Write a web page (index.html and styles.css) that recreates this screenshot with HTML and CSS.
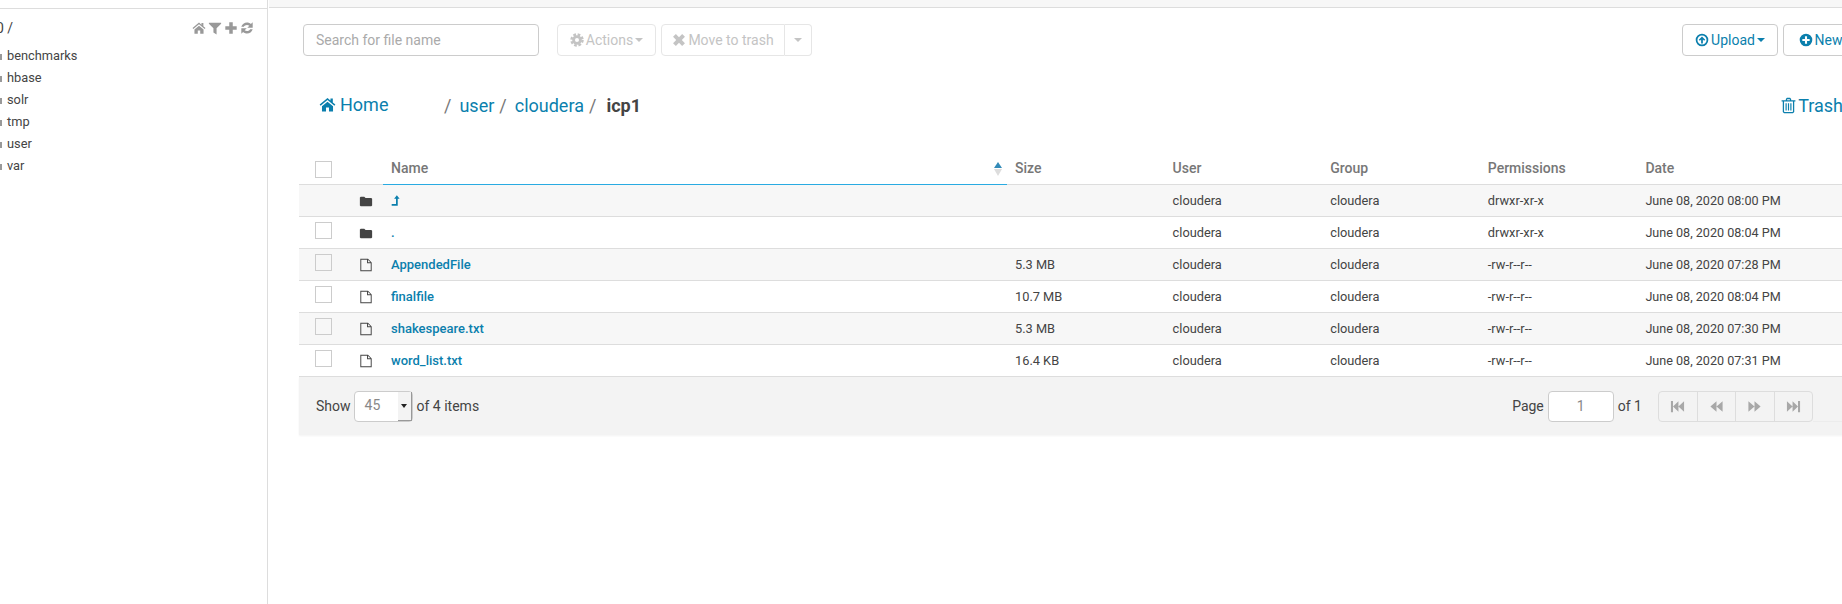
FILE: index.html
```html
<!DOCTYPE html>
<html>
<head>
  <title>File Browser</title>
  <link rel="stylesheet" href="styles.css">
</head>
<body>

<svg class="defs" xmlns="http://www.w3.org/2000/svg">
  <symbol id="i-home" viewBox="0 0 16 16"><path d="M8 1.8 0.6 8l0.9 1.1L8 3.7l6.5 5.4L15.4 8 13 6V2.4h-2.2v1.800zM2.800 9.600V14.500h3.800v-3.600h2.800v3.600h3.800V9.600L8 5.300z"/></symbol>
  <symbol id="i-filter" viewBox="0 0 16 16"><path d="M1 2h14v1L9.800 8.400V15.500L6.200 13V8.400L1 3z"/></symbol>
  <symbol id="i-plus" viewBox="0 0 16 16"><path d="M6 1.500h4v4.500h4.500v4H10v4.500H6V10H1.500V6H6z"/></symbol>
  <symbol id="i-refresh" viewBox="0 0 16 16"><path d="M1.500 6.600C2.400 3.500 5 1.600 8 1.600c1.700 0 3.200.6 4.400 1.700L14.500 1.500V7.800H8.300l2.400-2.400C9.900 4.800 9 4.500 8 4.500c-1.700 0-3 .9-3.600 2.100zM14.500 9.400C13.600 12.500 11 14.400 8 14.400c-1.700 0-3.200-.6-4.400-1.700L1.500 14.500V8.200H7.700l-2.400 2.400c.8.600 1.700.9 2.700.9 1.700 0 3-.9 3.600-2.100z"/></symbol>
  <symbol id="i-cog" viewBox="0 0 16 16"><circle cx="8" cy="8" r="3.900" fill="none" stroke="currentColor" stroke-width="3.200"/><circle cx="8" cy="8" r="6.300" fill="none" stroke="currentColor" stroke-width="2.800" stroke-dasharray="3 1.950"/></symbol>
  <symbol id="i-times" viewBox="0 0 16 16"><path d="M4.400 1.200 8 4.800l3.600-3.600 3.200 3.200L11.200 8l3.600 3.600-3.200 3.200L8 11.200l-3.600 3.600-3.200-3.200L4.800 8 1.200 4.400z"/></symbol>
  <symbol id="i-upload" viewBox="0 0 16 16"><path fill-rule="evenodd" d="M8 .8a7.200 7.200 0 1 1 0 14.400A7.200 7.200 0 0 1 8 .8zm0 2a5.200 5.200 0 1 0 0 10.400A5.200 5.200 0 0 0 8 2.800zM8 3.900l3.700 3.700-1.300 1.300-1.400-1.400V12H7V7.500L5.600 8.900 4.300 7.600z"/></symbol>
  <symbol id="i-new" viewBox="0 0 16 16"><path fill-rule="evenodd" d="M8 .8a7.200 7.200 0 1 1 0 14.400A7.200 7.200 0 0 1 8 .8zM6.800 3.800v3H3.800v2.400h3v3h2.400v-3h3V6.800h-3v-3z"/></symbol>
  <symbol id="i-trash" viewBox="0 0 16 16"><path fill-rule="evenodd" d="M5.500 3V1.800L6.500.8h3l1 1V3H14.500v1.200H13.400V14l-1.200 1.200H3.800L2.600 14V4.200H1.500V3zM6.700 3h2.600V2H6.700zM3.800 4.200V13.600l.4.400h7.600l.4-.4V4.200zM5.200 5.800h1.100v6.800H5.200zM7.450 5.800h1.100v6.800H7.450zM9.700 5.800h1.100v6.800H9.700z"/></symbol>
  <symbol id="i-folder" viewBox="0 0 16 16"><path d="M1 4l1-1h4l1.500 1.500H14l1 1V13l-1 1H2l-1-1z"/></symbol>
  <symbol id="i-file" viewBox="0 0 16 16"><path fill-rule="evenodd" d="M1.500.8h8.800l4.200 4.200V15.200H1.500zM2.600 1.900V14.100h10.800V6H9.200V1.900zM10.300 2.200V4.900h2.800z"/></symbol>
  <symbol id="i-levelup" viewBox="0 0 16 16"><path d="M8.500.5 12.500 5.500H9.800V15.500H1V13H7.300V5.500H4.500z"/></symbol>
  <symbol id="i-first" viewBox="0 0 16 16"><path d="M1 2h2.200v12H1zM3.200 8 9 2.500v11zM9 8l6-5.500v11z"/></symbol>
  <symbol id="i-prev" viewBox="0 0 16 16"><path d="M1.500 8 8 2.500v11zM8 8l6.500-5.500v11z"/></symbol>
  <symbol id="i-next" viewBox="0 0 16 16"><path d="M1.500 2.500 8 8 1.500 13.500zM8 2.500 14.500 8 8 13.500z"/></symbol>
  <symbol id="i-last" viewBox="0 0 16 16"><path d="M1 2.500 7 8l-6 5.500zM7 2.500 12.800 8 7 13.500zM12.800 2H15v12h-2.200z"/></symbol>
</svg>

<div class="page">
  <aside class="sidebar">
    <div class="side-top"></div>
    <div class="side-path">
      <span class="crumb-root">0 /</span>
      <span class="side-tools">
        <svg class="ic"><use href="#i-home"/></svg>
        <svg class="ic"><use href="#i-filter"/></svg>
        <svg class="ic"><use href="#i-plus"/></svg>
        <svg class="ic"><use href="#i-refresh"/></svg>
      </span>
    </div>
    <ul class="tree">
      <li><span class="tree-ic"></span>benchmarks</li>
      <li><span class="tree-ic"></span>hbase</li>
      <li><span class="tree-ic"></span>solr</li>
      <li><span class="tree-ic"></span>tmp</li>
      <li><span class="tree-ic"></span>user</li>
      <li><span class="tree-ic"></span>var</li>
    </ul>
  </aside>

  <main class="main">
    <div class="main-top"></div>
    <div class="content">
      <div class="toolbar">
        <div class="search">Search for file name</div>
        <button class="btn btn-off btn-actions"><svg class="ic"><use href="#i-cog"/></svg>Actions<span class="caret"></span></button>
        <div class="btn-group">
          <button class="btn btn-off btn-trash"><svg class="ic"><use href="#i-times"/></svg>Move to trash</button>
          <button class="btn btn-off btn-split"><span class="caret"></span></button>
        </div>
        <button class="btn btn-link btn-upload"><svg class="ic"><use href="#i-upload"/></svg>Upload<span class="caret"></span></button>
        <button class="btn btn-link btn-new"><svg class="ic"><use href="#i-new"/></svg>New<span class="caret"></span></button>
      </div>

      <div class="crumbs">
        <a class="home"><svg class="ic"><use href="#i-home"/></svg>Home</a>
        <span class="sep first">/</span>
        <a>user</a>
        <span class="sep">/</span>
        <a>cloudera</a>
        <span class="sep">/</span>
        <b>icp1</b>
        <a class="trash"><svg class="ic"><use href="#i-trash"/></svg>Trash</a>
      </div>

      <table class="files">
        <colgroup>
          <col class="c-check"><col class="c-icon"><col class="c-name">
          <col class="c-col"><col class="c-col"><col class="c-col"><col class="c-col"><col class="c-date">
        </colgroup>
        <thead>
          <tr>
            <th><span class="box"></span></th>
            <th></th>
            <th class="sorted">Name<span class="sort"><i class="up"></i><i class="down"></i></span></th>
            <th>Size</th>
            <th>User</th>
            <th>Group</th>
            <th>Permissions</th>
            <th>Date</th>
          </tr>
        </thead>
        <tbody>
          <tr>
            <td></td>
            <td><svg class="ic ic-row"><use href="#i-folder"/></svg></td>
            <td><a><svg class="ic ic-up"><use href="#i-levelup"/></svg></a></td>
            <td></td><td>cloudera</td><td>cloudera</td><td>drwxr-xr-x</td><td class="date">June 08, 2020 08:00 PM</td>
          </tr>
          <tr>
            <td><span class="box"></span></td>
            <td><svg class="ic ic-row"><use href="#i-folder"/></svg></td>
            <td><a>.</a></td>
            <td></td><td>cloudera</td><td>cloudera</td><td>drwxr-xr-x</td><td class="date">June 08, 2020 08:04 PM</td>
          </tr>
          <tr>
            <td><span class="box"></span></td>
            <td><svg class="ic ic-row"><use href="#i-file"/></svg></td>
            <td><a>AppendedFile</a></td>
            <td>5.3 MB</td><td>cloudera</td><td>cloudera</td><td>-rw-r--r--</td><td class="date">June 08, 2020 07:28 PM</td>
          </tr>
          <tr>
            <td><span class="box"></span></td>
            <td><svg class="ic ic-row"><use href="#i-file"/></svg></td>
            <td><a>finalfile</a></td>
            <td>10.7 MB</td><td>cloudera</td><td>cloudera</td><td>-rw-r--r--</td><td class="date">June 08, 2020 08:04 PM</td>
          </tr>
          <tr>
            <td><span class="box"></span></td>
            <td><svg class="ic ic-row"><use href="#i-file"/></svg></td>
            <td><a>shakespeare.txt</a></td>
            <td>5.3 MB</td><td>cloudera</td><td>cloudera</td><td>-rw-r--r--</td><td class="date">June 08, 2020 07:30 PM</td>
          </tr>
          <tr>
            <td><span class="box"></span></td>
            <td><svg class="ic ic-row"><use href="#i-file"/></svg></td>
            <td><a>word_list.txt</a></td>
            <td>16.4 KB</td><td>cloudera</td><td>cloudera</td><td>-rw-r--r--</td><td class="date">June 08, 2020 07:31 PM</td>
          </tr>
        </tbody>
      </table>

      <div class="pager">
        <span>Show</span>
        <div class="select"><span>45</span><span class="select-arrow"><span class="caret"></span></span></div>
        <span class="after-select">of 4 items</span>
        <span class="page-label">Page</span>
        <div class="page-input">1</div>
        <span>of 1</span>
        <div class="page-btns">
          <span><svg class="ic"><use href="#i-first"/></svg></span>
          <span><svg class="ic"><use href="#i-prev"/></svg></span>
          <span><svg class="ic"><use href="#i-next"/></svg></span>
          <span><svg class="ic"><use href="#i-last"/></svg></span>
        </div>
        <div class="page-rest"></div>
      </div>
    </div>
  </main>
</div>

</body>
</html>
```

FILE: styles.css
```css
html, body {
  margin: 0;
  height: 100%;
  overflow: hidden;
  background: #fff;
  color: #444;
  font-family: Roboto, "Liberation Sans", sans-serif;
  font-size: 13px;
}
.defs {
  display: none;
}
.ic {
  width: 1em;
  height: 1em;
  fill: currentColor;
  flex: none;
}
a {
  color: #0b7fad;
}

.page {
  display: flex;
  height: 604px;
}

/* left tree */
.sidebar {
  width: 267px;
  flex: none;
  border-right: 1px solid #ddd;
  overflow: hidden;
}
.side-top {
  height: 8px;
  border-bottom: 1px solid #ddd;
}
.side-path {
  display: flex;
  justify-content: space-between;
  align-items: center;
  height: 20px;
  margin-top: 9px;
  margin-left: -4px;
  padding-right: 13px;
}
.crumb-root {
  font-size: 14px;
}
.side-tools {
  display: flex;
  gap: 2px;
  font-size: 14px;
  color: #999;
}
.tree {
  list-style: none;
  margin: 7px 0 0;
  padding: 0 0 0 7px;
}
.tree li {
  position: relative;
  height: 22px;
  line-height: 22px;
  font-size: 12.800px;
}
.tree-ic {
  position: absolute;
  left: -15px;
  top: 9px;
  width: 10px;
  height: 6px;
  background: #999;
}

/* right part */
.main {
  flex: 1;
  min-width: 0;
  overflow: hidden;
  margin-left: 1px;
}
.main-top {
  height: 7px;
  background: #f7f7f7;
  border-bottom: 1px solid #ddd;
}
.content {
  width: 1620px;
  padding-left: 30px;
}

.toolbar {
  display: flex;
  align-items: center;
  gap: 5px;
  margin: 16px 0 0 4px;
  width: 1567px;
}
.search {
  width: 222px;
  height: 30px;
  line-height: 30px;
  padding-left: 12px;
  margin-right: 13px;
  border: 1px solid #ccc;
  border-radius: 4px;
  color: #aaa;
  font-size: 14px;
}
.btn {
  display: flex;
  align-items: center;
  justify-content: center;
  gap: 2px;
  height: 32px;
  padding: 0;
  background: #fff;
  border: 1px solid #ccc;
  border-radius: 4px;
  font-family: inherit;
  font-size: 14px;
}
.btn-off {
  color: #c4c4c4;
  border-color: #e6e6e6;
}
.btn-link {
  color: #0b7fad;
}
.btn-actions {
  width: 99px;
}
.btn-group {
  display: flex;
}
.btn-trash {
  width: 124px;
  border-radius: 4px 0 0 4px;
}
.btn-split {
  width: 27px;
  border-left: 0;
  border-radius: 0 4px 4px 0;
}
.btn-upload {
  width: 96px;
  margin-left: auto;
}
.btn-new {
  width: 85px;
  margin-right: 2px;
}
.caret {
  display: inline-block;
  margin-left: 0;
  border-top: 4px solid currentColor;
  border-left: 4px solid transparent;
  border-right: 4px solid transparent;
}
.btn-split .caret {
  margin: 0;
}

.crumbs {
  display: flex;
  align-items: center;
  width: 1567px;
  margin: 31px 0 0 4px;
  height: 36px;
  font-size: 18px;
}
.crumbs .ic {
  margin-right: 4px;
  vertical-align: -2px;
  font-size: 17px;
}
.home {
  margin: -2px 0 0 16px;
  width: 125px;
}
.sep {
  color: #777;
  margin: 0 8px 0 5px;
}
.sep.first {
  margin-left: 0;
  margin-right: 8px;
}
.crumbs b {
  margin-left: 2px;
  font-weight: 700;
  color: #444;
}
.trash {
  margin-left: auto;
  margin-right: 27px;
}
.crumbs .trash .ic {
  margin-right: 1px;
}

/* file table */
.files {
  table-layout: fixed;
  border-collapse: collapse;
  width: 1590px;
  margin-top: 23px;
}
.c-check {
  width: 52px;
}
.c-icon {
  width: 32px;
}
.c-name {
  width: 624px;
}
.c-col {
  width: 157.600px;
}
.files th {
  height: 32px;
  padding: 6px 8px 0;
  text-align: left;
  font-weight: 500;
  font-size: 14px;
  color: #777;
  border-bottom: 1px solid #ddd;
}
.files th .box {
  margin-top: 2px;
}
.files th.sorted {
  position: relative;
  border-bottom: 1px solid #29abe2;
}
.sort {
  position: absolute;
  right: 5px;
  top: 16px;
}
.sort i {
  display: block;
  border-left: 4.500px solid transparent;
  border-right: 4.500px solid transparent;
}
.sort .up {
  border-bottom: 6px solid #338bb8;
  margin-bottom: 1px;
}
.sort .down {
  border-top: 7px solid #ddd;
}
.files td {
  height: 31px;
  padding: 0 8px;
  border-bottom: 1px solid #ddd;
  font-size: 12.800px;
}
.files td.date {
  font-size: 12.600px;
}
.files tbody tr:nth-child(odd) {
  background: #f7f7f7;
}
.files td a {
  font-size: 13px;
  font-weight: 500;
}
.box {
  display: block;
  width: 15px;
  height: 15px;
  margin: -4px 0 0 8px;
  border: 1px solid #ccc;
  background: #fff;
}
.files tbody tr:nth-child(odd) .box {
  background: #f7f7f7;
}
.ic-row {
  display: block;
  font-size: 14px;
  color: #444;
}
.ic-up {
  display: block;
  font-size: 11px;
}

/* footer */
.pager {
  display: flex;
  align-items: center;
  gap: 4px;
  box-sizing: border-box;
  width: 1590px;
  height: 58px;
  padding-left: 17px;
  background: #f3f3f3;
  box-shadow: 0 1px 2px rgba(0, 0, 0, .05);
  font-size: 14px;
  white-space: nowrap;
}
.select {
  display: flex;
  justify-content: space-between;
  width: 47px;
  height: 29px;
  margin-left: -1px;
  padding-left: 10px;
  line-height: 26px;
  border: 1px solid #ccc;
  border-radius: 4px;
  background: #fff;
  color: #888;
}
.select-arrow {
  display: flex;
  align-items: center;
  justify-content: center;
  width: 13px;
  background: #f3f3f3;
  color: #222;
  border-right: 1px solid #999;
  border-bottom: 1px solid #999;
}
.select-arrow .caret {
  margin: 0;
  border-width: 4px 3px 0;
}
.page-label {
  margin-left: auto;
}
.page-input {
  width: 64px;
  height: 29px;
  line-height: 29px;
  text-align: center;
  border: 1px solid #ccc;
  border-radius: 4px;
  background: #fff;
  color: #888;
}
.page-btns {
  display: flex;
  margin-left: 12px;
  height: 29px;
  border: 1px solid #ddd;
  border-radius: 4px;
  color: #a8a8a8;
  font-size: 15px;
}
.page-btns span {
  display: flex;
  align-items: center;
  justify-content: center;
  width: 37.500px;
  border-left: 1px solid #ddd;
}
.page-btns span:first-child {
  border-left: 0;
}
.page-rest {
  width: 76px;
  height: 30px;
  margin-left: -4px;
  border-bottom: 1px solid #ececec;
}
```
